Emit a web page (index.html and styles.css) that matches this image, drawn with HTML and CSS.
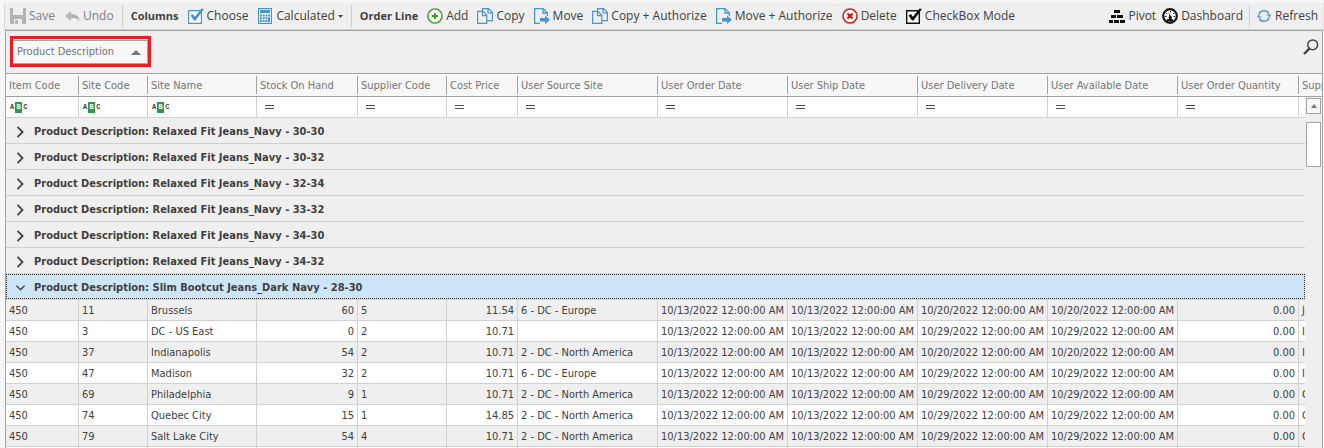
FILE: index.html
```html
<!DOCTYPE html>
<html lang="en">
<head>
<meta charset="utf-8">
<title>Order Lines</title>
<link rel="stylesheet" href="styles.css">
</head>
<body>
<svg class="defs" aria-hidden="true">
  <symbol id="i-copy" viewBox="0 0 16 16"><path d="M5.500 3V.6h6l3.900 3.900v8.100H10.500M11 .6V5h4.400M.6 3.400h5.400l3.800 3.800v8.200H.6zM5.500 3.400v4.300h4.300" fill="none" stroke="#4a93d1" stroke-width="1.200"/></symbol>
  <symbol id="i-move" viewBox="0 0 16 16"><path d="M6 15.500H.6V.6h8.500l4.300 4.300V8M9 .6V5h4.400" fill="none" stroke="#4a93d1" stroke-width="1.300"/><path d="M6 10h5V7.500l5 4.200-5 4.300v-2.600H6z" fill="#4a93d1"/></symbol>
  <symbol id="i-eq" viewBox="0 0 9 4"><path d="M0 0h9v1H0zM0 3h9v1H0z" fill="#4d4d4d"/></symbol>
  <symbol id="i-right" viewBox="0 0 7 10"><path d="M1 .8L5.200 5 1 9.200" fill="none" stroke="#444" stroke-width="1.500"/></symbol>
  <symbol id="i-down" viewBox="0 0 10 7"><path d="M.5 1L5 5.500 9.500 1" fill="none" stroke="#444" stroke-width="1.500"/></symbol>
</svg>
<div class="app">
  <header class="toolbar">
    <button class="tool" disabled><svg class="icon" viewBox="0 0 16 16"><path d="M0 0h16v16H0z M3 0v7h10V0z M4 11v5h8v-5z" fill="#b3b3b3" fill-rule="evenodd"/><path d="M5 12h3v4H5z" fill="#b3b3b3"/></svg>Save</button>
    <button class="tool" disabled><svg class="icon" viewBox="0 0 16 16"><path d="M1 8l6-5v3c5 0 8 2 8.500 7C13.500 10.500 11 10 7 10v3z" fill="#b3b3b3"/></svg>Undo</button>
    <span class="sep"></span>
    <span class="group-name">Columns</span>
    <button class="tool"><svg class="icon" viewBox="0 0 16 16"><path d="M.6 2.600h12.800v12.800H.6z" fill="#fff" stroke="#4a93d1" stroke-width="1.200"/><path d="M2.500 7.500L5 6l1.800 2.800L13.500.5 16 1 7.500 12.500H6z" fill="#4a93d1"/></svg>Choose</button>
    <button class="tool"><svg class="icon" viewBox="0 0 16 16"><path d="M1.600.6h12.800v14.800H1.600z" fill="#fff" stroke="#4a93d1" stroke-width="1.200"/><path d="M3 2h10v3H3zM3 6.500h2v2H3zM5.700 6.500h2v2h-2zM8.400 6.500h2v2h-2zM11 6.500h2v2h-2zM3 9.300h2v2H3zM5.700 9.300h2v2h-2zM8.400 9.300h2v2h-2zM3 12h2v2H3zM5.700 12h2v2h-2zM8.400 12h2v2h-2zM11 9.300h2V14h-2z" fill="#4a93d1"/></svg>Calculated<svg class="caret" viewBox="0 0 5 3"><path d="M0 0h5L2.500 3z" fill="#444"/></svg></button>
    <span class="sep"></span>
    <span class="group-name">Order Line</span>
    <button class="tool"><svg class="icon" viewBox="0 0 16 16"><circle cx="8" cy="8" r="7.100" fill="#fff" stroke="#2e9e1f" stroke-width="1.400"/><path d="M8 5v6M5 8h6" stroke="#2e9e1f" stroke-width="1.800"/></svg>Add</button>
    <button class="tool"><svg class="icon"><use href="#i-copy"/></svg>Copy</button>
    <button class="tool"><svg class="icon"><use href="#i-move"/></svg>Move</button>
    <button class="tool"><svg class="icon"><use href="#i-copy"/></svg>Copy + Authorize</button>
    <button class="tool"><svg class="icon"><use href="#i-move"/></svg>Move + Authorize</button>
    <button class="tool"><svg class="icon" viewBox="0 0 16 16"><circle cx="8" cy="8" r="7" fill="#fff" stroke="#e01212" stroke-width="1.500"/><path d="M5.500 5.500l5 5M10.500 5.500l-5 5" stroke="#e01212" stroke-width="2.400"/></svg>Delete</button>
    <button class="tool"><svg class="icon" viewBox="0 0 16 16"><path d="M.7 2.700h12.600v12.600H.7z" fill="#fff" stroke="#111" stroke-width="1.400"/><path d="M2.500 7.500L5 6l1.800 2.800L13.500.5 16 1 7.500 12.500H6z" fill="#111"/></svg>CheckBox Mode</button>
    <div class="tools-end">
      <button class="tool"><svg class="icon" viewBox="0 0 16 16"><path d="M5 2h6v3H5zM2 7h5v3H2zM8 7h6v3H8zM0 12h4v3H0zM5 12h5v3H5zM11 12h5v3h-5z" fill="#111"/></svg>Pivot</button>
      <button class="tool"><svg class="icon" viewBox="0 0 16 16"><circle cx="8" cy="8" r="6.800" fill="#fff" stroke="#111" stroke-width="2.200"/><path d="M6.500 4l1 5h1.800zM5.500 11h5l1.500 2.500h-8z" fill="#111"/><path d="M3 8.500h1.500M4 5l1 1M8.500 3v1.500M12 5l-1 1M13 8.500h-1.500" stroke="#111"/><circle cx="8.300" cy="9.600" r="1.700" fill="#111"/></svg>Dashboard</button>
      <span class="sep"></span>
      <button class="tool"><svg class="icon" viewBox="0 0 16 16"><path d="M2.800 6.500A5.500 5.500 0 0 1 12.800 5.500M13.200 9.500A5.500 5.500 0 0 1 3.200 10.500" fill="none" stroke="#5b9bd5" stroke-width="1.600"/><path d="M10.500 6.500h5l-2.200 3zM.5 9.500h5l-2.700-3z" fill="#5b9bd5"/></svg>Refresh</button>
    </div>
  </header>

  <main class="grid">
    <div class="group-panel">
      <div class="marker"><button class="chip">Product Description<svg class="sort" viewBox="0 0 10 5"><path d="M5 0l5 5H0z" fill="#777"/></svg></button></div>
      <button class="find" aria-label="Find"><svg viewBox="0 0 16 16"><circle cx="9.700" cy="5.800" r="4.900" fill="none" stroke="#444" stroke-width="1.500"/><path d="M6.500 9.300L1 15" stroke="#444" stroke-width="2.400"/></svg></button>
    </div>
    <div class="view">
      <table>
        <colgroup><col class="c73"><col class="c69"><col class="c109"><col class="c101"><col class="c89"><col class="c71"><col class="c140"><col class="c130"><col class="c130"><col class="c130"><col class="c130"><col class="c121"><col class="c120"></colgroup>
        <thead>
          <tr class="heads"><th><div>Item Code</div></th><th><div>Site Code</div></th><th><div>Site Name</div></th><th><div>Stock On Hand</div></th><th><div>Supplier Code</div></th><th><div>Cost Price</div></th><th><div>User Source Site</div></th><th><div>User Order Date</div></th><th><div>User Ship Date</div></th><th><div>User Delivery Date</div></th><th><div>User Available Date</div></th><th><div>User Order Quantity</div></th><th><div>Supp</div></th></tr>
          <tr class="filters">
            <td><label class="filter"><span class="abc">A<b>B</b>C</span><input aria-label="Filter item code"></label></td>
            <td><label class="filter"><span class="abc">A<b>B</b>C</span><input aria-label="Filter site code"></label></td>
            <td><label class="filter"><span class="abc">A<b>B</b>C</span><input aria-label="Filter site name"></label></td>
            <td><label class="filter"><svg class="eq"><use href="#i-eq"/></svg><input aria-label="Filter stock on hand"></label></td>
            <td><label class="filter"><svg class="eq"><use href="#i-eq"/></svg><input aria-label="Filter supplier code"></label></td>
            <td><label class="filter"><svg class="eq"><use href="#i-eq"/></svg><input aria-label="Filter cost price"></label></td>
            <td><label class="filter"><svg class="eq"><use href="#i-eq"/></svg><input aria-label="Filter user source site"></label></td>
            <td><label class="filter"><svg class="eq"><use href="#i-eq"/></svg><input aria-label="Filter user order date"></label></td>
            <td><label class="filter"><svg class="eq"><use href="#i-eq"/></svg><input aria-label="Filter user ship date"></label></td>
            <td><label class="filter"><svg class="eq"><use href="#i-eq"/></svg><input aria-label="Filter user delivery date"></label></td>
            <td><label class="filter"><svg class="eq"><use href="#i-eq"/></svg><input aria-label="Filter user available date"></label></td>
            <td><label class="filter"><svg class="eq"><use href="#i-eq"/></svg><input aria-label="Filter user order quantity"></label></td>
            <td></td>
          </tr>
        </thead>
        <tbody>
          <tr class="group"><th colspan="13"><button><svg class="chev"><use href="#i-right"/></svg>Product Description: Relaxed Fit Jeans_Navy - 30-30</button></th></tr>
          <tr class="group"><th colspan="13"><button><svg class="chev"><use href="#i-right"/></svg>Product Description: Relaxed Fit Jeans_Navy - 30-32</button></th></tr>
          <tr class="group"><th colspan="13"><button><svg class="chev"><use href="#i-right"/></svg>Product Description: Relaxed Fit Jeans_Navy - 32-34</button></th></tr>
          <tr class="group"><th colspan="13"><button><svg class="chev"><use href="#i-right"/></svg>Product Description: Relaxed Fit Jeans_Navy - 33-32</button></th></tr>
          <tr class="group"><th colspan="13"><button><svg class="chev"><use href="#i-right"/></svg>Product Description: Relaxed Fit Jeans_Navy - 34-30</button></th></tr>
          <tr class="group"><th colspan="13"><button><svg class="chev"><use href="#i-right"/></svg>Product Description: Relaxed Fit Jeans_Navy - 34-32</button></th></tr>
          <tr class="group"><th colspan="13"><button class="focused" aria-expanded="true"><svg class="chev"><use href="#i-down"/></svg>Product Description: Slim Bootcut Jeans_Dark Navy - 28-30</button></th></tr>
        </tbody>
        <tbody class="rows">
          <tr><td>450</td><td>11</td><td>Brussels</td><td class="num">60</td><td>5</td><td class="num">11.54</td><td>6 - DC - Europe</td><td class="date">10/13/2022 12:00:00 AM</td><td class="date">10/13/2022 12:00:00 AM</td><td class="date">10/20/2022 12:00:00 AM</td><td class="date">10/20/2022 12:00:00 AM</td><td class="num">0.00</td><td>J</td></tr>
          <tr><td>450</td><td>3</td><td>DC - US East</td><td class="num">0</td><td>2</td><td class="num">10.71</td><td></td><td class="date">10/13/2022 12:00:00 AM</td><td class="date">10/13/2022 12:00:00 AM</td><td class="date">10/29/2022 12:00:00 AM</td><td class="date">10/29/2022 12:00:00 AM</td><td class="num">0.00</td><td>I</td></tr>
          <tr><td>450</td><td>37</td><td>Indianapolis</td><td class="num">54</td><td>2</td><td class="num">10.71</td><td>2 - DC - North America</td><td class="date">10/13/2022 12:00:00 AM</td><td class="date">10/13/2022 12:00:00 AM</td><td class="date">10/20/2022 12:00:00 AM</td><td class="date">10/20/2022 12:00:00 AM</td><td class="num">0.00</td><td>I</td></tr>
          <tr><td>450</td><td>47</td><td>Madison</td><td class="num">32</td><td>2</td><td class="num">10.71</td><td>6 - DC - Europe</td><td class="date">10/13/2022 12:00:00 AM</td><td class="date">10/13/2022 12:00:00 AM</td><td class="date">10/29/2022 12:00:00 AM</td><td class="date">10/29/2022 12:00:00 AM</td><td class="num">0.00</td><td>I</td></tr>
          <tr><td>450</td><td>69</td><td>Philadelphia</td><td class="num">9</td><td>1</td><td class="num">10.71</td><td>2 - DC - North America</td><td class="date">10/13/2022 12:00:00 AM</td><td class="date">10/13/2022 12:00:00 AM</td><td class="date">10/29/2022 12:00:00 AM</td><td class="date">10/29/2022 12:00:00 AM</td><td class="num">0.00</td><td>C</td></tr>
          <tr><td>450</td><td>74</td><td>Quebec City</td><td class="num">15</td><td>1</td><td class="num">14.85</td><td>2 - DC - North America</td><td class="date">10/13/2022 12:00:00 AM</td><td class="date">10/13/2022 12:00:00 AM</td><td class="date">10/29/2022 12:00:00 AM</td><td class="date">10/29/2022 12:00:00 AM</td><td class="num">0.00</td><td>C</td></tr>
          <tr><td>450</td><td>79</td><td>Salt Lake City</td><td class="num">54</td><td>4</td><td class="num">10.71</td><td>2 - DC - North America</td><td class="date">10/13/2022 12:00:00 AM</td><td class="date">10/13/2022 12:00:00 AM</td><td class="date">10/29/2022 12:00:00 AM</td><td class="date">10/29/2022 12:00:00 AM</td><td class="num">0.00</td><td>C</td></tr>
          <tr><td></td><td></td><td></td><td></td><td></td><td></td><td></td><td></td><td></td><td></td><td></td><td></td><td></td></tr>
        </tbody>
      </table>
      <div class="scrollbar">
        <button class="up" aria-label="Scroll up"><svg viewBox="0 0 6 4"><path d="M3 0l3 4H0z" fill="#777"/></svg></button>
        <div class="thumb"></div>
      </div>
    </div>
  </main>
</div>
</body>
</html>
```
FILE: styles.css
```css
* { box-sizing: border-box; }

body {
  margin: 0;
  height: 100vh;
  overflow: hidden;
  background: #f7f7f7;
  color: #404040;
  font: 11px/14px "DejaVu Sans Condensed", "DejaVu Sans", sans-serif;
}

button {
  border: 0;
  padding: 0;
  background: none;
  color: inherit;
  font: inherit;
}

svg { display: block; flex: none; }
.defs { display: none; }

.app {
  display: flex;
  flex-direction: column;
  height: 100vh;
  padding: 3px 0 0 4px;
}

/* Toolbar */
.toolbar {
  display: flex;
  align-items: center;
  gap: 9px;
  height: 27px;
  padding: 0 5px;
  border-left: 1px solid #d9d9d9;
  border-right: 1px solid #e4e4e4;
  border-bottom: 1px solid #d0d0d0;
  background: #efefef;
  font: 12px/16px "Open Sans", "Noto Sans", sans-serif;
}

.tools-end {
  display: flex;
  align-items: center;
  gap: 6px;
  margin-left: auto;
}

.tool {
  display: flex;
  align-items: center;
  gap: 3px;
  white-space: nowrap;
}

.tool:disabled { color: #808080; }
.icon { width: 16px; height: 16px; }
.caret { width: 5px; height: 3px; }
.group-name { font-size: 11px; font-weight: 700; white-space: nowrap; }
.sep { width: 1px; height: 22px; background: #cdcdcd; }
.toolbar > .sep { margin: 0 -1px; }

/* Grid frame */
.grid {
  display: flex;
  flex: 1;
  flex-direction: column;
  min-height: 0;
  margin: 0 1px;
  border: solid #a3a3a3;
  border-width: 1px 1px 0;
  background: #efefef;
}

.group-panel {
  display: flex;
  align-items: flex-start;
  justify-content: space-between;
  height: 43px;
  padding: 5px 3px 0 4px;
  border-bottom: 1px solid #a3a3a3;
}

.marker {
  padding: 1px 0 0;
  border: 3px solid #ed1c24;
}

.chip {
  display: flex;
  align-items: center;
  gap: 17px;
  height: 24px;
  padding: 0 6px 0 4px;
  border: solid #a3a3a3;
  border-width: 1px 1px 1px 0;
  background: #f7f7f7;
  color: #757575;
}

.sort { width: 10px; height: 5px; }
.find { padding: 3px 0; }
.find svg { width: 16px; height: 16px; }

/* Table */
.view {
  position: relative;
  flex: 1;
  min-height: 0;
  overflow: hidden;
  container-type: inline-size;
}

table {
  width: 100%;
  min-width: 1413px;
  table-layout: fixed;
  border-collapse: separate;
  border-spacing: 0;
}

.c69 { width: 69px; }
.c71 { width: 71px; }
.c73 { width: 73px; }
.c89 { width: 89px; }
.c101 { width: 101px; }
.c109 { width: 109px; }
.c120 { width: 120px; }
.c121 { width: 121px; }
.c130 { width: 130px; }
.c140 { width: 140px; }

th, td {
  padding: 0;
  text-align: left;
  white-space: nowrap;
}

.heads th {
  padding: 2px 0;
  border-bottom: 1px solid #a3a3a3;
  background: #f7f7f7;
  color: #757575;
  font-weight: 400;
}

.heads div {
  padding: 2px 0 0 3px;
  border-right: 1px solid #a3a3a3;
  line-height: 16px;
}

.filters td, .rows td {
  height: 21px;
  border: solid #d0d0d0;
  border-width: 0 1px 1px 0;
  background: #fff;
}

.filter {
  display: flex;
  align-items: center;
  height: 20px;
  padding-left: 4px;
}

.filter input {
  flex: 1;
  min-width: 0;
  height: 18px;
  border: 0;
  padding: 0;
  outline: 0;
  background: none;
  font: inherit;
}

.eq { width: 9px; height: 4px; margin-left: 4px; }

.abc {
  display: flex;
  gap: 1px;
  font: 700 7px/11px "Liberation Mono", monospace;
}

.abc b {
  width: 7px;
  background: #2f9747;
  color: #fff;
  text-align: center;
}

.group th { height: 26px; border-bottom: 1px solid #d0d0d0; }

.group button {
  display: flex;
  align-items: center;
  gap: 9px;
  width: calc(100cqw - 17px);
  height: 25px;
  padding: 2px 0 0 9px;
  border: 1px solid transparent;
  font-weight: 700;
}

.group .focused { border: 1px dotted #333; background: #cde5f8; }
.chev { width: 9px; height: 12px; }

.rows td { padding: 2px 3px 0; }
.rows tr:nth-child(odd) td { background: #efefef; }
.rows .num { text-align: right; }
.rows .date { text-align: center; }

/* Vertical scrollbar over the table's right edge */
.scrollbar {
  position: absolute;
  top: 23px;
  right: 0;
  bottom: 0;
  display: flex;
  flex-direction: column;
  align-items: center;
  gap: 8px;
  width: 17px;
  padding-top: 1px;
  background: #efefef;
}

.up, .thumb {
  width: 15px;
  border: 1px solid #a3a3a3;
  background: #fff;
}

.up {
  display: flex;
  align-items: center;
  justify-content: center;
  height: 16px;
  background: #f7f7f7;
}

.up svg { width: 6px; height: 4px; }
.thumb { height: 45px; }
```
